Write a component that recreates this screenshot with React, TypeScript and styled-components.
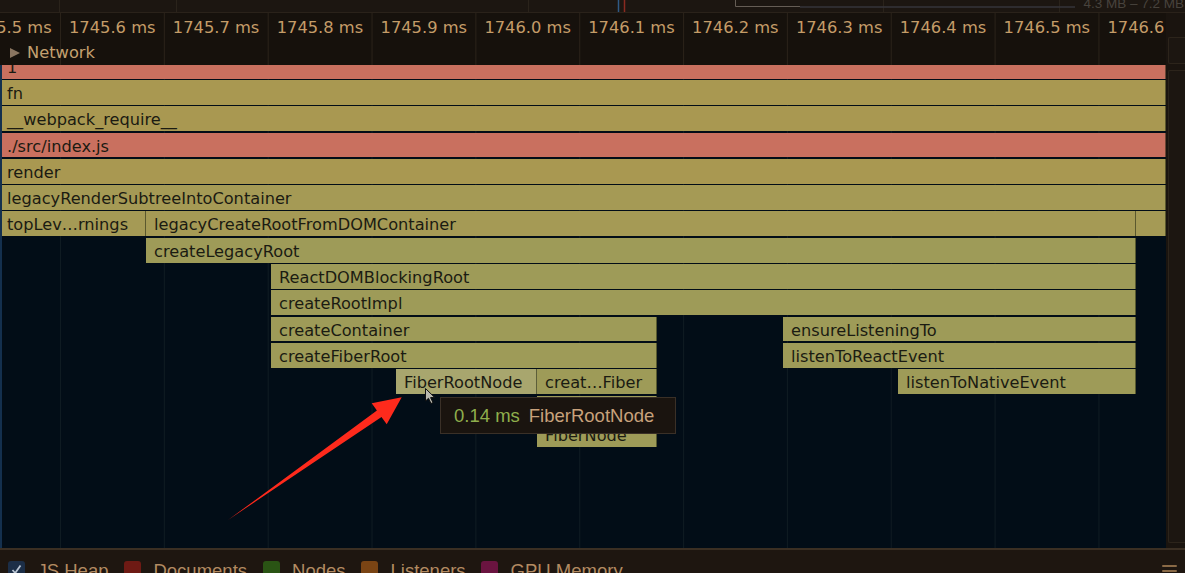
import React from 'react';
import styled, { createGlobalStyle } from 'styled-components';

const Global = createGlobalStyle`
  html, body { margin: 0; padding: 0; background: #1d1712; }
  body { width: 1185px; height: 573px; overflow: hidden; }
`;

const Page = styled.div`
  position: relative;
  width: 1185px;
  height: 573px;
  overflow: hidden;
  display: flex;
  flex-direction: column;
  background: #1d1712;
  font-family: "DejaVu Sans", sans-serif;
`;

const Overview = styled.div`
  position: relative;
  height: 13px;
  flex-shrink: 0;
  display: flex;
  justify-content: flex-end;
  align-items: flex-end;
  background: #1c1611;
  border-bottom: 1px solid #2a221a;
  box-sizing: border-box;
  overflow: hidden;
`;

const OverviewArt = styled.svg`
  position: absolute;
  left: 0;
  top: 0;
`;

const RangeLabel = styled.span`
  position: relative;
  font-family: "Liberation Sans", Arial, sans-serif;
  font-size: 13.5px;
  line-height: 13px;
  color: #48433d;
  margin-right: 1px;
  margin-bottom: 2px;
  white-space: nowrap;
`;

const Middle = styled.div`
  display: flex;
  height: 535px;
  flex-shrink: 0;
`;

const MainCol = styled.div`
  width: 1166px;
  flex-shrink: 0;
  display: flex;
  flex-direction: column;
  overflow: hidden;
`;

const Header = styled.div`
  height: 52px;
  flex-shrink: 0;
  display: flex;
  flex-direction: column;
  background-color: #16110c;
  background-image: linear-gradient(to right, #2a2219 1px, transparent 1px);
  background-size: 103.85px 100%;
  background-position: 60px 0;
`;

const Ruler = styled.div`
  height: 27px;
  display: flex;
  align-items: center;
  overflow: hidden;
  white-space: nowrap;
  color: #c49c68;
  font-size: 16.3px;
`;

const TickLabel = styled.span`
  flex: 0 0 103.85px;
  box-sizing: border-box;
  padding-left: 9px;
  padding-top: 1px;
  &:first-child { margin-left: -43.85px; }
`;

const TrackRow = styled.div`
  height: 25px;
  display: flex;
  align-items: center;
  padding-left: 10px;
  gap: 7px;
  color: #c4a070;
  font-size: 16.3px;
`;

const Caret = styled.span`
  width: 0;
  height: 0;
  border-left: 10px solid #8a7560;
  border-top: 5.5px solid transparent;
  border-bottom: 5.5px solid transparent;
`;

const Flame = styled.div`
  flex: 1;
  border-left: 2px solid #14304e;
  background-color: #020d17;
  background-image: linear-gradient(to right, #0f1b22 1px, transparent 1px);
  background-size: 103.85px 100%;
  background-position: 58px 0;
  overflow: hidden;
`;

const FlameInner = styled.div`
  margin-top: -11.3px;
  display: flex;
  flex-direction: column;
`;

const Row = styled.div`
  height: 26.3px;
  flex-shrink: 0;
  display: flex;
`;

const tones: Record<string, string> = {
  red: '#c9705f',
  a: '#a99851',
  b: '#a59a55',
  c: '#9e9b58',
  hi: '#a8a66e',
};

const Bar = styled.div<{ $tone: string; $pad: number }>`
  flex-shrink: 0;
  height: 24.8px;
  box-sizing: border-box;
  background: ${(p) => tones[p.$tone]};
  border-right: 1px solid rgba(30, 34, 14, 0.55);
  color: #1b1b12;
  font-size: 16.2px;
  line-height: 27.5px;
  padding-left: ${(p) => p.$pad}px;
  white-space: nowrap;
  overflow: hidden;
`;

const ScrollCol = styled.div`
  width: 19px;
  flex-shrink: 0;
  display: flex;
  flex-direction: column;
  gap: 6px;
  padding: 24px 0 5px 2px;
  box-sizing: border-box;
  background: #1a140f;
`;

const ScrollBox = styled.div<{ $grow?: boolean }>`
  height: 25px;
  ${(p) => (p.$grow ? 'flex: 1;' : '')}
  border: 1px solid #2c241b;
  border-right: none;
  border-radius: 2px 0 0 2px;
  background: #1c1611;
`;

const Separator = styled.div`
  height: 2px;
  flex-shrink: 0;
  background: #3b2f23;
`;

const Legend = styled.div`
  flex: 1;
  display: flex;
  align-items: flex-start;
  padding: 10px 0 0 8px;
  background: #1e1610;
  font-family: "Liberation Sans", Arial, sans-serif;
  font-size: 18.5px;
  line-height: 18px;
  color: #b38b62;
`;

const Swatch = styled.span<{ $color: string }>`
  width: 17px;
  height: 17px;
  flex-shrink: 0;
  margin-top: 1px;
  border-radius: 3px;
  background: ${(p) => p.$color};
  display: flex;
  align-items: center;
  justify-content: center;
  margin-right: 12.5px;
`;

const LegendLabel = styled.span`
  margin-right: 15.5px;
  padding-top: 2px;
  white-space: nowrap;
`;

const Menu = styled.div`
  margin-left: auto;
  margin-right: 8px;
  margin-top: 5px;
  width: 15px;
  display: flex;
  flex-direction: column;
  gap: 3px;
  & > span {
    height: 2px;
    background: #8a6a46;
    border-radius: 1px;
  }
`;

const Tooltip = styled.div`
  position: absolute;
  left: 440px;
  top: 397px;
  width: 236px;
  height: 37px;
  box-sizing: border-box;
  display: flex;
  align-items: center;
  gap: 9px;
  padding-left: 13px;
  background: #1a140f;
  border: 1px solid #3a3027;
  font-family: "Liberation Sans", Arial, sans-serif;
  font-size: 18.5px;
  white-space: nowrap;
`;

const Time = styled.span`
  color: #8fae4c;
`;

const Name = styled.span`
  color: #c8a27c;
`;

const OverlaySvg = styled.svg`
  position: absolute;
  left: 0;
  top: 0;
  pointer-events: none;
`;

type B = [number, number, string, string];

const rows: B[][] = [
  [[2, 1166, '1', 'red']],
  [[2, 1166, 'fn', 'a']],
  [[2, 1166, '__webpack_require__', 'a']],
  [[2, 1166, './src/index.js', 'red']],
  [[2, 1166, 'render', 'a']],
  [[2, 1166, 'legacyRenderSubtreeIntoContainer', 'b']],
  [
    [2, 146, 'topLev…rnings', 'b'],
    [146, 1136, 'legacyCreateRootFromDOMContainer', 'b'],
    [1136, 1166, '', 'b'],
  ],
  [[146, 1136, 'createLegacyRoot', 'c']],
  [[271, 1136, 'ReactDOMBlockingRoot', 'c']],
  [[271, 1136, 'createRootImpl', 'c']],
  [
    [271, 657, 'createContainer', 'c'],
    [783, 1136, 'ensureListeningTo', 'c'],
  ],
  [
    [271, 657, 'createFiberRoot', 'c'],
    [783, 1136, 'listenToReactEvent', 'c'],
  ],
  [
    [396, 537, 'FiberRootNode', 'hi'],
    [537, 657, 'creat…Fiber', 'c'],
    [898, 1136, 'listenToNativeEvent', 'c'],
  ],
  [[537, 657, 'createFiber', 'c']],
  [[537, 657, 'FiberNode', 'c']],
];

const ticks = [
  '1745.5', '1745.6', '1745.7', '1745.8', '1745.9', '1746.0',
  '1746.1', '1746.2', '1746.3', '1746.4', '1746.5', '1746.6',
];

const legend = [
  { label: 'JS Heap', color: '#1c2e47', checked: true },
  { label: 'Documents', color: '#6e1a14' },
  { label: 'Nodes', color: '#2a5414' },
  { label: 'Listeners', color: '#7a4414' },
  { label: 'GPU Memory', color: '#6a1440' },
];

export default function App() {
  return (
    <Page>
      <Global />
      <Overview>
        <OverviewArt width="1185" height="13">
          <line x1="59.5" y1="0" x2="59.5" y2="13" stroke="#2a231b" />
          <line x1="176.5" y1="0" x2="176.5" y2="13" stroke="#2a231b" />
          <line x1="528.5" y1="0" x2="528.5" y2="13" stroke="#2a231b" />
          <line x1="618.5" y1="0" x2="618.5" y2="13" stroke="#2f5a86" strokeWidth="1.5" />
          <line x1="624.5" y1="0" x2="624.5" y2="13" stroke="#8a2a20" strokeWidth="1.5" />
          <line x1="883.5" y1="0" x2="883.5" y2="13" stroke="#2a231b" />
          <line x1="1059.5" y1="0" x2="1059.5" y2="13" stroke="#2a231b" />
          <path d="M735.5 0 V6.5 H800" stroke="#655d55" fill="none" />
          <line x1="800" y1="7" x2="1075" y2="7" stroke="#34343a" strokeWidth="1.5" />
        </OverviewArt>
        <RangeLabel>4.3 MB – 7.2 MB</RangeLabel>
      </Overview>

      <Middle>
        <MainCol>
          <Header>
            <Ruler>
              {ticks.map((t) => (
                <TickLabel key={t}>{t} ms</TickLabel>
              ))}
            </Ruler>
            <TrackRow>
              <Caret />
              <span>Network</span>
            </TrackRow>
          </Header>
          <Flame>
            <FlameInner>
              {rows.map((bars, i) => {
                let cursor = 2;
                return (
                  <Row key={i}>
                    {bars.map(([s, e, label, tone], j) => {
                      const ml = s - cursor;
                      cursor = e;
                      return (
                        <Bar
                          key={j}
                          $tone={tone}
                          $pad={s <= 2 ? 5 : 8}
                          style={{ marginLeft: ml, width: e - s }}
                        >
                          {label}
                        </Bar>
                      );
                    })}
                  </Row>
                );
              })}
            </FlameInner>
          </Flame>
        </MainCol>
        <ScrollCol>
          <ScrollBox />
          <ScrollBox $grow />
        </ScrollCol>
      </Middle>

      <Separator />

      <Legend>
        {legend.map((l) => (
          <React.Fragment key={l.label}>
            <Swatch $color={l.color}>
              {l.checked && (
                <svg width="13" height="13" viewBox="0 0 13 13">
                  <path d="M2.5 7 L5.2 10 L10.5 2.5" stroke="#b9c4d2" strokeWidth="1.8" fill="none" />
                </svg>
              )}
            </Swatch>
            <LegendLabel>{l.label}</LegendLabel>
          </React.Fragment>
        ))}
        <Menu>
          <span />
          <span />
        </Menu>
      </Legend>

      <Tooltip>
        <Time>0.14 ms</Time>
        <Name>FiberRootNode</Name>
      </Tooltip>

      <OverlaySvg width="1185" height="573">
        <polygon
          points="228,520 376.9,410.5 371.7,403.3 401.7,397.3 386.7,424.3 381.5,417.1"
          fill="#fe2a1c"
        />
        <path
          d="M425.5 388.5 L425.5 401 L428.5 398.3 L431 403.5 L433 402.6 L430.6 397.6 L434.5 397.3 Z"
          fill="#b9b9b0"
          stroke="#111"
          strokeWidth="1"
          strokeLinejoin="round"
        />
      </OverlaySvg>
    </Page>
  );
}
